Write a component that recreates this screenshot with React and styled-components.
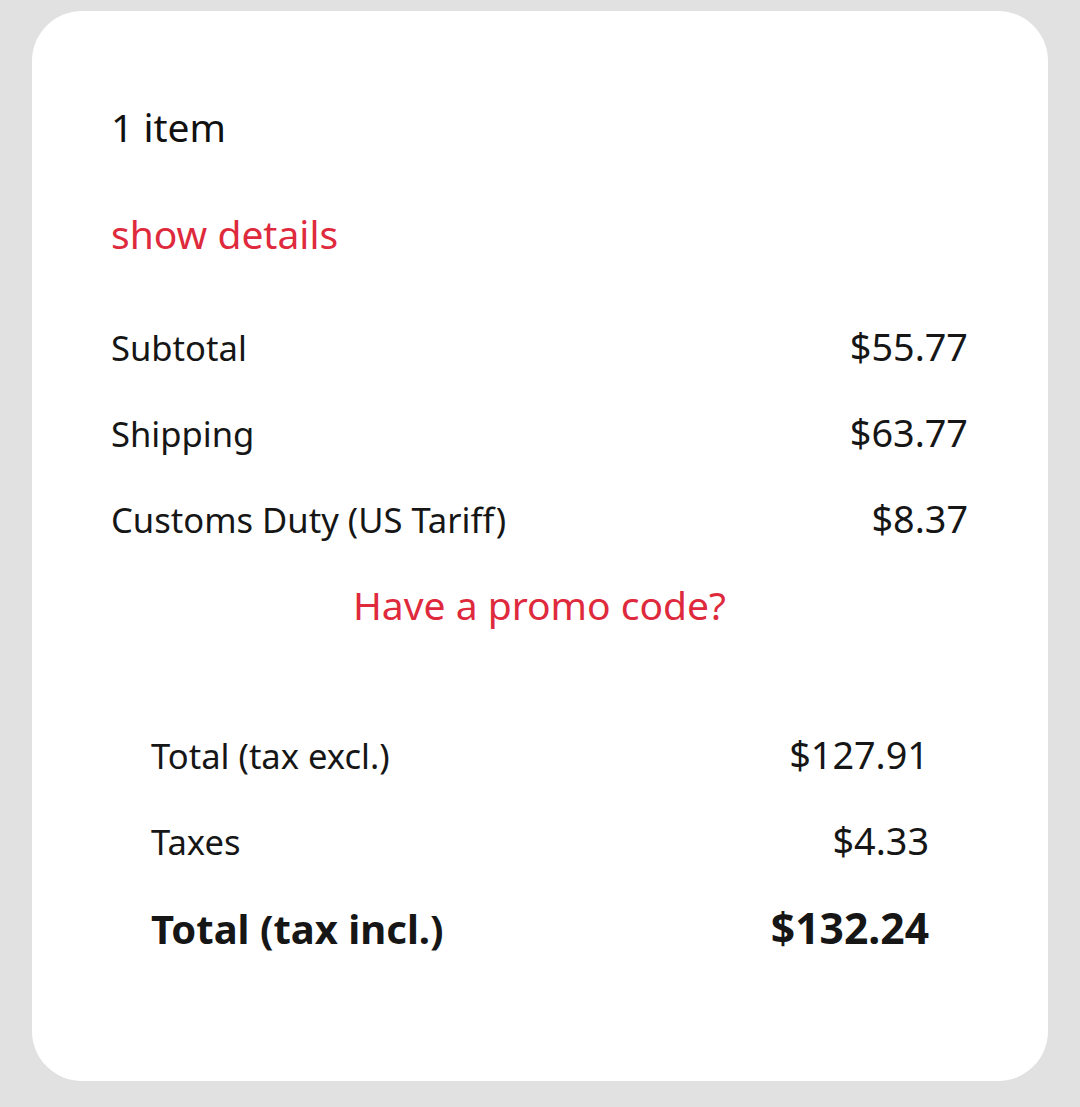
import React from "react";
import styled, { createGlobalStyle } from "styled-components";

const Global = createGlobalStyle`
  html, body { margin: 0; padding: 0; background: #e1e1e1; }
  body { font-family: "Noto Sans", "Open Sans", sans-serif; }
`;

const Page = styled.div`
  min-height: 1107px;
  padding: 11px 32px 26px;
  box-sizing: border-box;
`;

const Card = styled.section`
  background: #ffffff;
  border-radius: 50px;
  height: 1070px;
  box-sizing: border-box;
  padding: 92px 80px 0 79px;
  display: flex;
  flex-direction: column;
`;

const Count = styled.div`
  font-size: 39px;
  line-height: 48px;
  color: #111;
`;

const Link = styled.a`
  color: #de2a3c;
  font-size: 39px;
  line-height: 48px;
  text-decoration: none;
  cursor: pointer;
  align-self: ${(p) => (p.$center ? "center" : "flex-start")};
  margin-top: ${(p) => p.$mt || 0}px;
`;

const Group = styled.div`
  display: flex;
  flex-direction: column;
  padding: 0 ${(p) => (p.$inset ? p.$inset - 1 : 0)}px 0 ${(p) => p.$inset || 0}px;
  margin-top: ${(p) => p.$mt || 0}px;
`;

const Row = styled.div`
  display: flex;
  justify-content: space-between;
  align-items: baseline;
  height: 86px;
  line-height: 86px;
  color: #161616;
  font-size: ${(p) => (p.$strong ? 40 : 34.6)}px;
  font-weight: ${(p) => (p.$strong ? 700 : 400)};
`;

const Value = styled.span`
  font-size: ${(p) => (p.$strong ? 42.6 : 37.8)}px;
`;

export default function App() {
  return (
    <>
      <Global />
      <Page>
        <Card>
          <Count>1 item</Count>
          <Link $mt={59}>show details</Link>
          <Group $mt={46}>
            <Row><span>Subtotal</span><Value>$55.77</Value></Row>
            <Row><span>Shipping</span><Value>$63.77</Value></Row>
            <Row><span>Customs Duty (US Tariff)</span><Value>$8.37</Value></Row>
          </Group>
          <Link $center $mt={19}>Have a promo code?</Link>
          <Group $inset={40} $mt={83}>
            <Row><span>Total (tax excl.)</span><Value>$127.91</Value></Row>
            <Row><span>Taxes</span><Value>$4.33</Value></Row>
            <Row $strong><span>Total (tax incl.)</span><Value $strong>$132.24</Value></Row>
          </Group>
        </Card>
      </Page>
    </>
  );
}
